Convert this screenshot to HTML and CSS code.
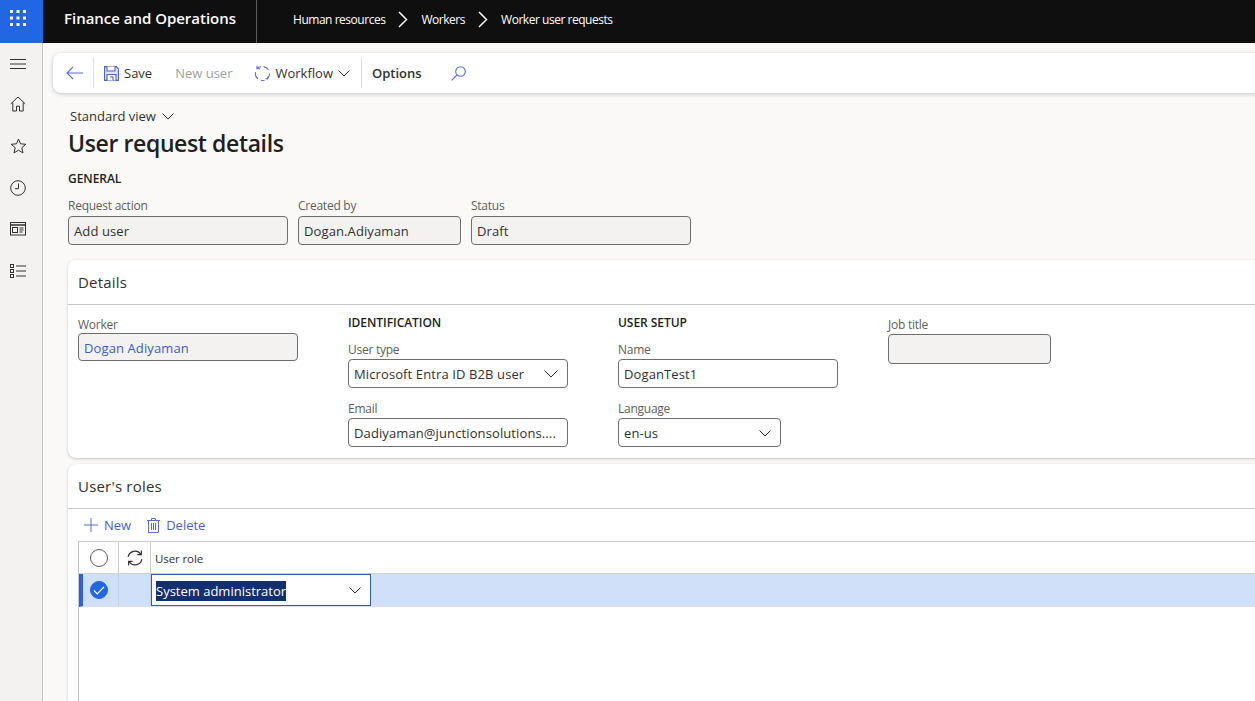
FILE: index.html
```html
<!DOCTYPE html>
<html lang="en">
<head>
<meta charset="utf-8">
<title>User request details</title>
<link rel="stylesheet" href="styles.css">
</head>
<body>
<header class="topbar">
  <div class="waffle">
    <svg width="16" height="16" viewBox="0 0 16 16" fill="#fff"><rect x="0" y="0" width="3" height="3"/><rect x="6.500" y="0" width="3" height="3"/><rect x="13" y="0" width="3" height="3"/><rect x="0" y="6.500" width="3" height="3"/><rect x="6.500" y="6.500" width="3" height="3"/><rect x="13" y="6.500" width="3" height="3"/><rect x="0" y="13" width="3" height="3"/><rect x="6.500" y="13" width="3" height="3"/><rect x="13" y="13" width="3" height="3"/></svg>
  </div>
  <div class="brand">Finance and Operations</div>
  <nav class="crumbs">
    <span>Human resources</span>
    <svg class="crumb-sep" width="10" height="17" viewBox="0 0 10 17" fill="none" stroke="#fff" stroke-width="1.500"><path d="M1 1l7.500 7.500L1 16"/></svg>
    <span>Workers</span>
    <svg class="crumb-sep" width="10" height="17" viewBox="0 0 10 17" fill="none" stroke="#fff" stroke-width="1.500"><path d="M1 1l7.500 7.500L1 16"/></svg>
    <span>Worker user requests</span>
  </nav>
</header>
<div class="shell">
  <aside class="sidenav">
    <svg width="16" height="12" viewBox="0 0 16 12" stroke="#323130" stroke-width="1"><path d="M0 1.500h16M0 6h16M0 10.500h16"/></svg>
    <svg width="16" height="16" viewBox="0 0 16 16" fill="none" stroke="#323130" stroke-width="1"><path d="M.8 7.800L8 1l7.200 6.800M2.800 6.500v8.500h3.700v-4.800h3v4.800h3.700V6.500"/></svg>
    <svg width="17" height="16" viewBox="0 0 16 16" fill="none" stroke="#323130" stroke-width="1"><path d="M8 1l2 4.800 5.300.5-4 3.400 1.200 5.200L8 12.200l-4.500 2.700 1.200-5.200-4-3.400 5.300-.5z"/></svg>
    <svg width="16" height="16" viewBox="0 0 16 16" fill="none" stroke="#323130" stroke-width="1"><circle cx="8" cy="8" r="7.300"/><path d="M8.500 3.500v5.200H5"/></svg>
    <svg width="16" height="14" viewBox="0 0 16 14" fill="none" stroke="#323130" stroke-width="1"><rect x=".5" y=".5" width="15" height="12.500"/><path d="M.5 3h15" stroke-width="1.500"/><rect x="2.500" y="5.500" width="5" height="5"/><path d="M9.500 6h4M9.500 8h4M9.500 10h3"/></svg>
    <svg class="nav-last" width="16" height="14" viewBox="0 0 16 14" fill="none" stroke="#323130" stroke-width="1"><rect x=".5" y=".5" width="3" height="3"/><rect x=".5" y="5.500" width="3" height="3"/><rect x=".5" y="10.500" width="3" height="3"/><path d="M6 2h10M6 7h10M6 12h10"/></svg>
  </aside>
  <main class="page">
    <div class="toolbar">
      <button class="tool back" aria-label="Back">
        <svg width="17" height="14" viewBox="0 0 17 14" fill="none" stroke="#5b6fd0" stroke-width="1.100"><path d="M17 7H1M7 1L1 7l6 6"/></svg>
      </button>
      <span class="tool-div first"></span>
      <button class="tool save">
        <svg width="15" height="15" viewBox="0 0 15 15" fill="#dfe5f8" stroke="#4a5fc4" stroke-width="1.100"><path d="M.6.6h11.600l2.200 2.200v11.600H.6z"/><path fill="#fff" d="M3 .6v4.400h8V.6M3 14.400V8.500h9v5.900M6 11h3v3.400"/></svg>
        Save
      </button>
      <span class="tool disabled">New user</span>
      <button class="tool workflow">
        <svg width="17" height="17" viewBox="0 0 17 17" fill="none" stroke="#5b6fd0" stroke-width="1.100"><path d="M3 3.500A7 7 0 0 1 7 1.700M9.500 1.600A7 7 0 0 1 14.500 5M15.600 8.500a7 7 0 0 1-2 5M10.500 15.300a7 7 0 0 1-3.500 0M4 14A7 7 0 0 1 1.500 7"/><path d="M3 .8v3h3M11.500 13.500l2 .5.500-2.500"/></svg>
        Workflow
        <svg class="chev" width="12" height="7" viewBox="0 0 12 7" fill="none" stroke="#323130"><path d="M.5.500L6 6l5.500-5.500"/></svg>
      </button>
      <span class="tool-div second"></span>
      <span class="tool options">Options</span>
      <button class="tool search" aria-label="Search">
        <svg width="15" height="15" viewBox="0 0 15 15" fill="none" stroke="#5b6fd0" stroke-width="1.100"><circle cx="9.500" cy="5.500" r="4.800"/><path d="M6 9L.6 14.400"/></svg>
      </button>
    </div>

    <div class="view">Standard view
      <svg width="12" height="7" viewBox="0 0 12 7" fill="none" stroke="#323130"><path d="M.5.500L6 6l5.500-5.500"/></svg>
    </div>
    <h1 class="title">User request details</h1>
    <h2 class="group-title general">GENERAL</h2>
    <div class="general-fields">
      <div class="field w220"><label>Request action</label><div class="box ro tall">Add user</div></div>
      <div class="field w163"><label>Created by</label><div class="box ro tall">Dogan.Adiyaman</div></div>
      <div class="field w220"><label>Status</label><div class="box ro tall">Draft</div></div>
    </div>

    <section class="card details">
      <h3 class="card-title">Details</h3>
      <div class="details-body">
        <div class="col col-worker">
          <div class="field w220"><label>Worker</label><div class="box ro link">Dogan Adiyaman</div></div>
        </div>
        <div class="col col-ident">
          <h2 class="group-title">IDENTIFICATION</h2>
          <div class="field w220"><label>User type</label><div class="box tall select">Microsoft Entra ID B2B user
            <svg width="14" height="8" viewBox="0 0 14 8" fill="none" stroke="#323130"><path d="M.5.500L7 7l6.500-6.500"/></svg></div></div>
          <div class="field w220"><label>Email</label><div class="box tall">Dadiyaman@junctionsolutions....</div></div>
        </div>
        <div class="col col-setup">
          <h2 class="group-title">USER SETUP</h2>
          <div class="field w220"><label>Name</label><div class="box tall">DoganTest1</div></div>
          <div class="field w163"><label>Language</label><div class="box tall select">en-us
            <svg width="12" height="7" viewBox="0 0 12 7" fill="none" stroke="#323130"><path d="M.5.500L6 6l5.500-5.500"/></svg></div></div>
        </div>
        <div class="col col-job">
          <div class="field w163"><label>Job title</label><div class="box ro tall"></div></div>
        </div>
      </div>
    </section>

    <section class="card roles">
      <h3 class="card-title">User's roles</h3>
      <div class="grid-tools">
        <span class="grid-tool">
          <svg width="14" height="14" viewBox="0 0 14 14" stroke="#5b6fd0"><path d="M7 0v14M0 7h14"/></svg>New
        </span>
        <span class="grid-tool">
          <svg width="13" height="15" viewBox="0 0 13 15" fill="none" stroke="#5b6fd0"><path d="M0 2.500h13M4.500 2.500V.5h4v2M1.500 2.500v12h10v-12M4.500 5v7M6.500 5v7M8.500 5v7"/></svg>Delete
        </span>
      </div>
      <div class="grid">
        <div class="grid-row grid-head">
          <div class="cell c-check"><span class="radio"></span></div>
          <div class="cell c-sync">
            <svg width="18" height="18" viewBox="0 0 17 17" fill="none" stroke="#323130" stroke-width="1.100"><path d="M2 7.500A6.600 6.600 0 0 1 14 5M15 9.500A6.600 6.600 0 0 1 3 12M14.500 1.500V5.300h-3.800M2.500 15.500v-3.800h3.800"/></svg>
          </div>
          <div class="cell c-role">User role</div>
        </div>
        <div class="grid-row grid-selected">
          <div class="cell c-check"><span class="radio on">
            <svg width="12" height="9" viewBox="0 0 12 9" fill="none" stroke="#fff" stroke-width="1.200"><path d="M1 4.500L4.200 8 11 1"/></svg>
          </span></div>
          <div class="cell c-sync"></div>
          <div class="role-edit"><span class="sel-text">System administrator</span>
            <svg width="12" height="7" viewBox="0 0 12 7" fill="none" stroke="#323130"><path d="M.5.500L6 6l5.500-5.500"/></svg>
          </div>
        </div>
      </div>
    </section>
  </main>
</div>
</body>
</html>
```
FILE: styles.css
```css
* { box-sizing: border-box; }
html, body { margin: 0; height: 100%; overflow: hidden; }
body {
  width: 1255px; height: 701px;
  font-family: "Open Sans", "Noto Sans", "Liberation Sans", sans-serif;
  font-size: 13px;
  color: #323130;
  background: #faf9f8;
  display: flex;
  flex-direction: column;
}
h1, h2, h3 { margin: 0; }
button { font: inherit; color: inherit; background: none; border: 0; padding: 0; }

.topbar {
  height: 43px; flex: none;
  background: #0f0f0f; color: #fff;
  display: flex; align-items: center;
}
.waffle {
  width: 43px; height: 43px;
  background: #2266e3;
  padding: 10px 0 0 10px;
}
.waffle svg { display: block; }
.brand {
  width: 214px; height: 43px;
  padding-left: 21px;
  border-right: 1px solid #605e5c;
  font-size: 15px; font-weight: 600; letter-spacing: -.02px;
  line-height: 36px;
}
.crumbs {
  display: flex; align-items: center;
  margin-left: 36px;
  padding-bottom: 4px;
  font-size: 12px; letter-spacing: -.47px;
}
.crumb-sep { margin: 0 13px; }

.shell { flex: 1; display: flex; min-height: 0; }
.sidenav {
  width: 43px; flex: none;
  background: #f3f2f1;
  border-right: 1px solid #c8c6c4;
  display: flex; flex-direction: column; align-items: center;
  padding: 15px 6px 0 0;
  gap: 26px;
}
.sidenav svg { flex: none; }
.sidenav .nav-last { margin-top: 2px; }

.page { flex: 1; min-width: 0; overflow: hidden; padding: 10px 0 0 25px; }

.toolbar {
  width: 1220px; height: 40px;
  margin-left: -15px;
  background: #fff;
  border-radius: 8px;
  box-shadow: 0 1px 4px rgba(0,0,0,.22);
  display: flex; align-items: center;
}
.tool {
  display: flex; align-items: center;
  font-size: 13px; white-space: nowrap;
}
.back { margin-left: 13px; }
.tool-div { width: 1px; height: 30px; background: #e1dfdd; }
.tool-div.first { margin-left: 10px; }
.tool-div.second { margin-left: 11px; }
.save { margin-left: 10px; gap: 5px; }
.disabled { color: #a19f9d; margin-left: 23px; }
.workflow { margin-left: 22px; gap: 4px; }
.chev { margin-left: 1px; }
.options { margin-left: 10px; font-weight: 600; }
.search { margin-left: 29px; }

.view {
  margin: 14px 0 0 2px;
  font-size: 13px; line-height: 18px;
  display: flex; align-items: center; gap: 6px;
}
.title { font-size: 23px; font-weight: 600; line-height: 32px; margin-top: 2px; letter-spacing: -.38px; color: #201f1e; }
.group-title { font-size: 12px; font-weight: 600; line-height: 16px; letter-spacing: -.05px; color: #201f1e; }
.general { margin-top: 12px; }

.general-fields { display: flex; gap: 10px; margin-top: 13px; }
.field { display: flex; flex-direction: column; }
.w220 { width: 220px; }
.w163 { width: 163px; }
.field label { font-size: 12px; line-height: 16px; letter-spacing: -.25px; color: #605e5c; height: 16px; margin-top: -2px; margin-bottom: 2px; }
.box {
  height: 28px;
  border: 1px solid #706e6c;
  border-radius: 4px;
  background: #fff;
  padding: 0 5px;
  font-size: 13px; letter-spacing: .11px; white-space: nowrap;
  display: flex; align-items: center; justify-content: space-between;
}
.details .box { padding-top: 1px; }
.tall { height: 29px; }
.ro { background: #f3f2f1; }
.link { color: #3b5fc4; }
.select svg { margin-right: 4px; flex: none; }

.card {
  width: 1207px;
  background: #fff;
  border-radius: 8px 0 0 8px;
  box-shadow: 0 1px 3px rgba(0,0,0,.2);
}
.details { margin-top: 15px; height: 198px; }
.card-title {
  height: 45px; padding-left: 10px;
  font-size: 15px; font-weight: 500; line-height: 44px; letter-spacing: .2px;
  color: #323130;
  border-bottom: 1px solid #c8c6c4;
}
.details-body { display: flex; padding-left: 10px; }
.col { display: flex; flex-direction: column; }
.col-worker { width: 270px; padding-top: 14px; }
.col-worker label { margin-bottom: 0; }
.col-ident { width: 270px; padding-top: 10px; }
.col-setup { width: 270px; padding-top: 10px; }
.col-job { padding-top: 13px; }
.col-job label { margin-top: -1px; margin-bottom: 1px; }
.col-ident .field, .col-setup .field { margin-top: 13px; }
.col-ident .group-title + .field label, .col-setup .group-title + .field label { margin-bottom: 1px; }
.col-ident .field + .field, .col-setup .field + .field { margin-top: 14px; }
.col-ident .field + .field label, .col-setup .field + .field label { margin-top: -1px; margin-bottom: 1px; }
.col-job .tall { height: 30px; }

.roles { margin-top: 6px; height: 300px; }
.grid-tools { display: flex; gap: 16px; padding-left: 16px; height: 32px; align-items: center; color: #4a5fc4; }
.grid-tool { display: flex; align-items: center; gap: 6px; font-size: 13px; }
.grid { margin-left: 10px; height: 200px; border-left: 1px solid #c8c6c4; border-top: 1px solid #d2d0ce; }
.grid-row { display: flex; align-items: stretch; }
.grid-head { height: 32px; border-bottom: 1px solid #d2d0ce; }
.grid-selected { height: 33px; background: #d0e0f8; border-left: 4px solid #2266e3; border-bottom: 1px solid #d8dfea; }
.cell { display: flex; align-items: center; border-right: 1px solid #d2d0ce; }
.c-check { width: 40px; padding-left: 11px; }
.grid-selected .c-check { width: 36px; padding-left: 7px; }
.c-sync { width: 32px; justify-content: center; }
.c-role { padding: 1px 0 0 4px; border-right: 0; font-size: 11.500px; letter-spacing: -.1px; font-weight: 500; color: #323130; }
.radio {
  width: 18px; height: 18px; border-radius: 50%;
  border: 1px solid #605e5c;
  display: flex; align-items: center; justify-content: center;
}
.radio.on { background: #2266e3; border-color: #2266e3; }
.role-edit {
  width: 220px; height: 32px;
  background: #fff;
  border: 1px solid #2b5fb5;
  padding: 1px 9px 0 4px;
  display: flex; align-items: center; justify-content: space-between;
  font-size: 13px;
}
.sel-text { background: #12306f; color: #fff; line-height: 20px; }
```
